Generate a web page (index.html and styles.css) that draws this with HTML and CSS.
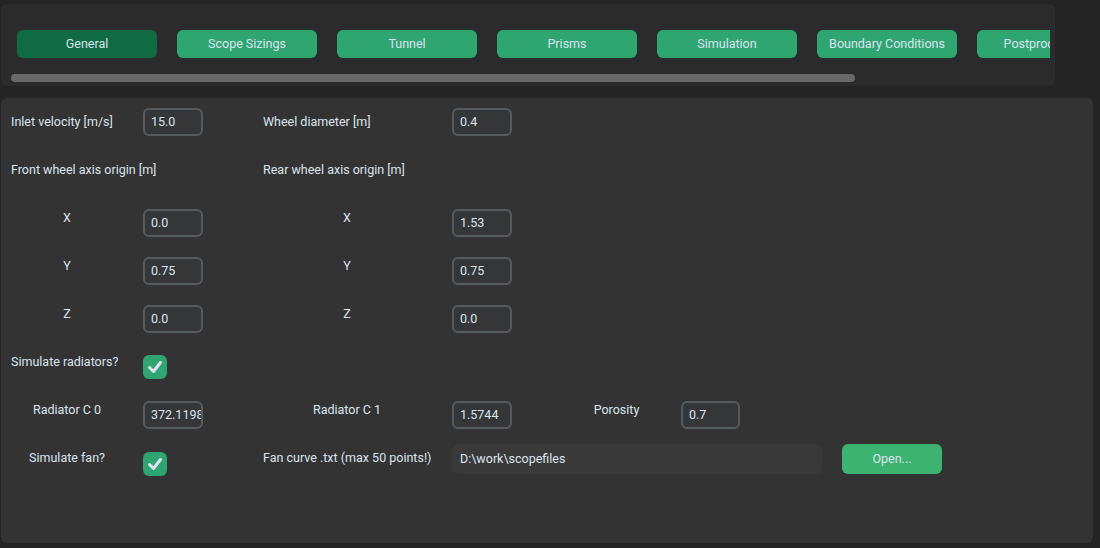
FILE: index.html
```html
<!DOCTYPE html>
<html>
<head>
<meta charset="utf-8">
<link rel="stylesheet" href="styles.css">
</head>
<body>
<div class="app">
  <div class="tabbar">
    <div class="tabs-viewport">
      <div class="tabs">
        <div class="tab active">General</div>
        <div class="tab">Scope Sizings</div>
        <div class="tab">Tunnel</div>
        <div class="tab">Prisms</div>
        <div class="tab">Simulation</div>
        <div class="tab">Boundary Conditions</div>
        <div class="tab">Postprocessing</div>
      </div>
    </div>
    <div class="hscroll"><div class="hscroll-thumb"></div></div>
  </div>

  <div class="panel">
    <div class="row">
      <div class="lbl c0">Inlet velocity [m/s]</div>
      <div class="entry c1"><span>15.0</span></div>
      <div class="lbl c2">Wheel diameter [m]</div>
      <div class="entry c3"><span>0.4</span></div>
    </div>
    <div class="row">
      <div class="lbl span2">Front wheel axis origin [m]</div>
      <div class="lbl c2">Rear wheel axis origin [m]</div>
    </div>
    <div class="row">
      <div class="lbl c0 w0">X</div>
      <div class="entry low c1"><span>0.0</span></div>
      <div class="lbl c2 w2">X</div>
      <div class="entry low c3"><span>1.53</span></div>
    </div>
    <div class="row">
      <div class="lbl c0 w0">Y</div>
      <div class="entry low c1"><span>0.75</span></div>
      <div class="lbl c2 w2">Y</div>
      <div class="entry low c3"><span>0.75</span></div>
    </div>
    <div class="row">
      <div class="lbl c0 w0">Z</div>
      <div class="entry low c1"><span>0.0</span></div>
      <div class="lbl c2 w2">Z</div>
      <div class="entry low c3"><span>0.0</span></div>
    </div>
    <div class="row">
      <div class="lbl c0">Simulate radiators?</div>
      <div class="check c1 chk-r">
        <svg width="24" height="24" viewBox="0 0 24 24"><polyline points="6.5,12.5 10.5,16.5 17.5,7.5" fill="none" stroke="#dce4ee" stroke-width="3" stroke-linecap="round" stroke-linejoin="round"/></svg>
      </div>
    </div>
    <div class="row">
      <div class="lbl c0 w0">Radiator C 0</div>
      <div class="entry low c1"><span>372.11985</span></div>
      <div class="lbl c2 w2">Radiator C 1</div>
      <div class="entry low c3"><span>1.5744</span></div>
      <div class="lbl c4 w4">Porosity</div>
      <div class="entry low c5"><span>0.7</span></div>
    </div>
    <div class="row last">
      <div class="lbl c0 w0">Simulate fan?</div>
      <div class="check c1 chk-f">
        <svg width="24" height="24" viewBox="0 0 24 24"><polyline points="6.5,12.5 10.5,16.5 17.5,7.5" fill="none" stroke="#dce4ee" stroke-width="3" stroke-linecap="round" stroke-linejoin="round"/></svg>
      </div>
      <div class="lbl c2">Fan curve .txt (max 50 points!)</div>
      <div class="file">
        <div class="path"><span>D:\work\scopefiles</span></div>
        <div class="open-btn">Open...</div>
      </div>
    </div>
  </div>
</div>
</body>
</html>
```

FILE: styles.css
```css
html, body {
  margin: 0;
  padding: 0;
  background: #242424;
}
body {
  font-family: Roboto, "Liberation Sans", sans-serif;
  font-size: 12.5px;
  color: #dce4ee;
  width: 1100px;
  height: 548px;
  overflow: hidden;
}
.app {
  display: flex;
  flex-direction: column;
  padding: 4px 0 0 1px;
}
.tabbar {
  width: 1054px;
  height: 82px;
  box-sizing: border-box;
  background: #2b2b2b;
  border-radius: 6px;
  padding: 26px 5px 4px 6px;
  display: flex;
  flex-direction: column;
}
.tabs-viewport {
  overflow: hidden;
  width: 1043px;
  height: 28px;
}
.tabs {
  display: flex;
  gap: 20px;
  padding-left: 10px;
}
.tab {
  flex: 0 0 140px;
  height: 28px;
  line-height: 28px;
  text-align: center;
  background: #2fa572;
  border-radius: 6px;
  white-space: nowrap;
  overflow: hidden;
}
.tab.active {
  background: #106a43;
}
.hscroll {
  margin: 16px 0 0 4px;
  height: 8px;
  width: 1000px;
}
.hscroll-thumb {
  width: 844px;
  height: 8px;
  background: #696969;
  border-radius: 4px;
}
.panel {
  margin-top: 12px;
  width: 1092px;
  height: 445px;
  box-sizing: border-box;
  background: #333333;
  border-radius: 6px;
  padding: 10px 0 0 10px;
}
.row {
  display: grid;
  grid-template-columns: 132px 120px 189px 120px 109px 1fr;
  height: 48px;
  align-items: start;
}
.row.last {
  height: 32px;
}
.lbl {
  height: 28px;
  line-height: 28px;
  white-space: nowrap;
}
.c0 { grid-column: 1; }
.c1 { grid-column: 2; }
.c2 { grid-column: 3; }
.c3 { grid-column: 4; }
.c4 { grid-column: 5; }
.c5 { grid-column: 6; }
.span2 { grid-column: 1 / 3; }
.w0 { width: 112px; text-align: center; }
.w2 { width: 168px; text-align: center; }
.w4 { width: 89px; text-align: center; }
.entry {
  width: 60px;
  height: 28px;
  box-sizing: border-box;
  border: 2px solid #565b5e;
  border-radius: 6px;
  background: #343638;
  padding: 0 3px 0 6px;
  line-height: 24px;
  overflow: hidden;
  white-space: nowrap;
}
.entry.c5 { width: 59px; }
.entry.low { margin-top: 5px; }
.check {
  width: 24px;
  height: 24px;
  background: #2fa572;
  border-radius: 6px;
}
.check svg { display: block; }
.chk-r { margin-top: 7px; }
.chk-f { margin-top: 8px; }
.file {
  grid-column: 4 / -1;
  display: flex;
  gap: 20px;
}
.path {
  width: 370px;
  height: 30px;
  box-sizing: border-box;
  background: #393939;
  border-radius: 6px;
  padding-left: 8px;
  line-height: 30px;
  white-space: nowrap;
  overflow: hidden;
}
.open-btn {
  width: 100px;
  height: 30px;
  line-height: 30px;
  text-align: center;
  background: #3cb371;
  border-radius: 6px;
}
```
